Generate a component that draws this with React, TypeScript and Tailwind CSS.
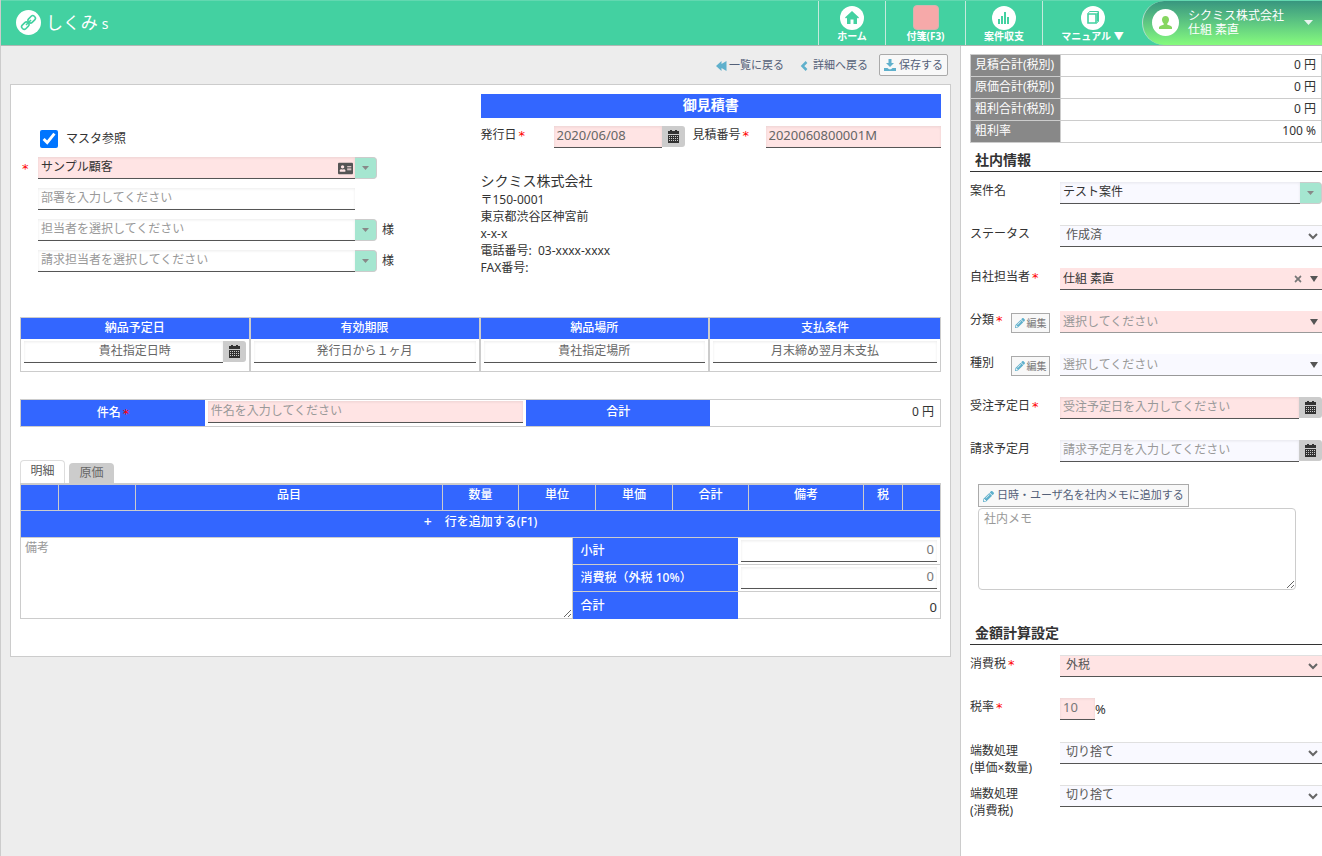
import React from "react";
import { FaPencilAlt, FaAddressCard, FaTimes } from "react-icons/fa";

const FIELD =
  "h-[22px] w-full min-w-0 rounded-none border-b border-[#555] px-[3px] pb-[3px] text-[12px] leading-[18px] text-[#333] placeholder:text-[#999] outline-none shadow-[inset_0_1px_3px_rgba(0,0,0,0.08)]";
const PLAIN = `${FIELD} bg-white`;
const PINK = `${FIELD} bg-[#ffe4e4]`;
const PALE = `${FIELD} bg-[#f9f9ff]`;

function Required() {
  return (
    <span className="inline-block pt-[3px] pl-[2px] align-top font-['DejaVu_Sans',sans-serif] text-[13px] leading-[14px] font-normal text-[#f00]">
      *
    </span>
  );
}

function CalendarIcon() {
  return (
    <svg viewBox="0 0 11 13" className="h-[13px] w-[11px]" fill="#333" aria-hidden="true">
      <path d="M0 1h2V0h2v1h3V0h2v1h2v3H0z" />
      <path
        fillRule="evenodd"
        d="M0 5h11v8H0zM1 6v1h1V6zm2 0v1h1V6zm2 0v1h1V6zm2 0v1h1V6zm2 0v1h1V6zM1 8v1h1V8zm2 0v1h1V8zm2 0v1h1V8zm2 0v1h1V8zm2 0v1h1V8zM1 10v1h1v-1zm2 0v1h1v-1zm2 0v1h1v-1zm2 0v1h1v-1zm2 0v1h1v-1z"
      />
    </svg>
  );
}

function CalendarButton({ label }: { label: string }) {
  return (
    <button
      type="button"
      aria-label={label}
      className="flex h-[21px] w-[23px] shrink-0 items-center justify-center rounded-r-[3px] bg-[#ccc]"
    >
      <CalendarIcon />
    </button>
  );
}

function DropButton({ label }: { label: string }) {
  return (
    <button
      type="button"
      aria-label={label}
      className="flex h-[22px] w-[22px] shrink-0 items-center justify-center rounded-r-[4px] border border-l-0 border-[#ccc] bg-[#a5e6d0]"
    >
      <svg viewBox="0 0 7 4" className="h-[4px] w-[7px]" fill="#888" aria-hidden="true">
        <path d="M0 0h7L3.5 4z" />
      </svg>
    </button>
  );
}

function Chevron() {
  return (
    <svg
      viewBox="0 0 10 7"
      className="pointer-events-none absolute top-[8px] right-[4px] h-[7px] w-[10px]"
      fill="none"
      stroke="#666"
      strokeWidth="2"
      aria-hidden="true"
    >
      <path d="M1 1l4 4 4-4" />
    </svg>
  );
}

function Triangle() {
  return (
    <svg
      viewBox="0 0 8 6"
      className="pointer-events-none absolute top-[8px] right-[4px] h-[6px] w-[8px]"
      fill="#555"
      aria-hidden="true"
    >
      <path d="M0 0h8L4 6z" />
    </svg>
  );
}

function Select({ id, value, pink }: { id: string; value: string; pink?: boolean }) {
  return (
    <div className="relative w-full">
      <select
        id={id}
        defaultValue={value}
        className={`h-[22px] w-full appearance-none rounded-none border-t border-b border-t-[#e0e0e0] border-b-[#555] pb-[3px] pl-[6px] text-[12px] leading-[18px] text-[#555] outline-none ${pink ? "bg-[#ffe4e4]" : "bg-[#f9f9ff]"}`}
      >
        <option>{value}</option>
      </select>
      <Chevron />
    </div>
  );
}

function Combo({
  id,
  value,
  pink,
  chosen,
}: {
  id: string;
  value: string;
  pink?: boolean;
  chosen?: boolean;
}) {
  return (
    <div className="relative w-full">
      <select
        id={id}
        defaultValue={value}
        className={`h-[22px] w-full appearance-none rounded-none border-b pl-[3px] text-[12px] leading-[18px] outline-none ${pink ? "bg-[#ffe4e4]" : "bg-[#f9f9ff]"} ${chosen ? "border-[#555] text-[#333]" : "border-[#999] text-[#999]"}`}
      >
        <option>{value}</option>
      </select>
      {chosen && (
        <button type="button" aria-label="クリア" className="absolute top-[6px] right-[19px] text-[10px] text-[#777]">
          <FaTimes />
        </button>
      )}
      <Triangle />
    </div>
  );
}

function SideRow({
  id,
  label,
  required,
  edit,
  children,
}: {
  id: string;
  label: React.ReactNode;
  required?: boolean;
  edit?: boolean;
  children: React.ReactNode;
}) {
  return (
    <div className="flex h-[43px] items-start">
      <div className="flex w-[90px] shrink-0 items-start">
        <label htmlFor={id} className="leading-[17px] whitespace-nowrap">
          {label}
          {required && <Required />}
        </label>
        {edit && (
          <button
            type="button"
            className="mt-[2px] mr-[10px] ml-auto flex h-[20px] w-[39px] items-center justify-center gap-[2px] border border-[#aaa] bg-[#f8f8f8] text-[10px] leading-none text-[#777]"
          >
            <FaPencilAlt className="text-[10px] text-[#5fb0cc]" />
            編集
          </button>
        )}
      </div>
      <div className="flex min-w-0 flex-1">{children}</div>
    </div>
  );
}

function SideHeading({ children }: { children: React.ReactNode }) {
  return (
    <h2 className="h-[22px] border-b border-[#333] pl-[5px] text-[14px] leading-[20px] font-bold">{children}</h2>
  );
}

function NavItem({ label, width, children }: { label: string; width: string; children: React.ReactNode }) {
  return (
    <a
      href="#"
      className={`flex flex-col items-center border-l border-[#c5e9dc] pt-[4px] text-[10px] leading-[12px] font-bold whitespace-nowrap text-white ${width}`}
    >
      <span className="flex h-[25px] items-center">{children}</span>
      <span>{label}</span>
    </a>
  );
}

function NavCircle({ children }: { children: React.ReactNode }) {
  return (
    <span className="flex h-[24px] w-[24px] items-center justify-center rounded-full bg-white text-[#43d1a1]">
      {children}
    </span>
  );
}

function Header() {
  return (
    <header className="flex h-[46px] items-stretch border-t border-b border-t-[#62d8b0] border-b-[#b0b8b4] bg-[#43d1a1]">
      <a href="#" className="flex items-center pb-[1px] pl-[15px] text-white">
        <span className="flex h-[25px] w-[25px] items-center justify-center rounded-full bg-white text-[#43d1a1]">
          <svg
            viewBox="0 0 17 17"
            className="h-[17px] w-[17px]"
            fill="none"
            stroke="currentColor"
            strokeWidth="1.6"
            aria-hidden="true"
          >
            <g transform="rotate(-45 8.5 8.5)">
              <rect x="0" y="6" width="8" height="5" rx="2.2" />
              <rect x="9" y="6" width="8" height="5" rx="2.2" />
              <path d="M5 8.5h7" />
            </g>
          </svg>
        </span>
        <span className="ml-[5px] text-[17px]">しくみ</span>
        <span className="ml-[4px] pt-[3px] text-[14px]">s</span>
      </a>
      <nav className="ml-auto flex">
        <NavItem label="ホーム" width="w-[67px]">
          <NavCircle>
            <svg viewBox="0 0 14 13" className="h-[13px] w-[14px]" fill="currentColor" aria-hidden="true">
              <path d="M7 0l7 6.500-1 1-1-.7V13H8.500V8.500h-3V13H2V6.800l-1 .7-1-1z" />
            </svg>
          </NavCircle>
        </NavItem>
        <NavItem label="付箋(F3)" width="w-[80px]">
          <span className="h-[25px] w-[26px] rounded-[4px] border border-[#d3b5b0] bg-[#f6a9a9]" />
        </NavItem>
        <NavItem label="案件収支" width="w-[77px]">
          <NavCircle>
            <svg viewBox="0 0 12 12" className="h-[12px] w-[12px]" fill="currentColor" aria-hidden="true">
              <rect x="0" y="7" width="2" height="5" />
              <rect x="3" y="4" width="2" height="8" />
              <rect x="6" y="0" width="2" height="12" />
              <rect x="9" y="5" width="2" height="7" />
            </svg>
          </NavCircle>
        </NavItem>
        <NavItem label="マニュアル ▼" width="w-[100px]">
          <NavCircle>
            <svg
              viewBox="0 0 12 13"
              className="h-[13px] w-[12px]"
              fill="none"
              stroke="currentColor"
              aria-hidden="true"
            >
              <path d="M1 3h8v9H1z" strokeWidth="1.6" />
              <path d="M1 2.500l1.500-2h9v10L9.500 12" />
              <path d="M10.500 1.500v9" strokeWidth="1.400" />
            </svg>
          </NavCircle>
        </NavItem>
      </nav>
      <button
        type="button"
        className="flex w-[180px] items-center rounded-l-full border-l border-[#b5dccd] bg-linear-to-b from-[#38967f] to-[#86fb7c] pb-[1px] pl-[9px] text-left text-[12px] leading-[14px] text-white"
      >
        <span className="flex h-[27px] w-[27px] shrink-0 items-center justify-center rounded-full bg-white text-[#86d660]">
          <svg viewBox="0 0 13 13" className="h-[13px] w-[13px]" fill="currentColor" aria-hidden="true">
            <path d="M6.500 0C8.700 0 10 1.500 10 3.600c0 1.600-.7 3-1.700 3.900v1.200c2.500.8 4.200 1.300 4.700 2.300V13H0v-2c.5-1 2.200-1.500 4.700-2.300V7.500C3.700 6.600 3 5.200 3 3.600 3 1.500 4.300 0 6.500 0z" />
          </svg>
        </span>
        <span className="ml-[9px] whitespace-nowrap">
          シクミス株式会社
          <br />
          仕組 素直
        </span>
        <svg viewBox="0 0 9 5" className="mr-[9px] ml-auto h-[5px] w-[9px]" fill="#e8f5ee" aria-hidden="true">
          <path d="M0 0h9L4.500 5z" />
        </svg>
      </button>
    </header>
  );
}

function Toolbar() {
  return (
    <div className="flex h-[38px] items-center justify-end gap-[16px] pr-[12px] text-[11px] text-[#546078]">
      <a href="#" className="flex items-center gap-[2px]">
        <svg viewBox="0 0 11 10" className="mt-[2px] h-[10px] w-[11px]" fill="#5fb0cc" aria-hidden="true">
          <path d="M5.500 0v3l5-3v10l-5-3v3L0 5z" />
        </svg>
        一覧に戻る
      </a>
      <a href="#" className="flex items-center gap-[5px]">
        <svg
          viewBox="0 0 8 10"
          className="mt-[2px] h-[10px] w-[8px]"
          fill="none"
          stroke="#5fb0cc"
          strokeWidth="2.500"
          aria-hidden="true"
        >
          <path d="M6.500 1l-4 4 4 4" />
        </svg>
        詳細へ戻る
      </a>
      <button
        type="button"
        className="-ml-[5px] flex h-[22px] items-center gap-[3px] rounded-[2px] border border-[#aaa] bg-[#f8f8f8] px-[4px]"
      >
        <svg viewBox="0 0 12 12" className="h-[12px] w-[12px]" fill="#5fb0cc" aria-hidden="true">
          <path d="M4.500 0h3v4H10L6 8 2 4h2.500z" />
          <path d="M0 9h3.500L5 10.200h2L8.500 9H12v3H0z" />
        </svg>
        保存する
      </button>
    </div>
  );
}

function Customer() {
  return (
    <div className="pt-[36px] pr-[60px]">
      <label className="flex h-[18px] items-center pl-[20px]">
        <input type="checkbox" defaultChecked className="h-[18px] w-[18px] accent-[#0075ff]" />
        <span className="pl-[8px]">マスタ参照</span>
      </label>
      <div className="mt-[9px] flex flex-col gap-[9px]">
        <div className="flex">
          <span className="w-[18px] shrink-0 pt-[2px]">
            <Required />
          </span>
          <div className="relative w-[317px]">
            <input aria-label="顧客" defaultValue="サンプル顧客" className={PINK} />
            <button
              type="button"
              aria-label="顧客情報"
              className="absolute top-[4px] right-[2px] text-[15px] text-[#555]"
            >
              <FaAddressCard />
            </button>
          </div>
          <DropButton label="顧客を選択" />
        </div>
        <div className="flex pl-[18px]">
          <div className="w-[317px]">
            <input aria-label="部署" placeholder="部署を入力してください" className={PLAIN} />
          </div>
        </div>
        <div className="flex items-center pl-[18px]">
          <div className="w-[317px]">
            <input aria-label="担当者" placeholder="担当者を選択してください" className={PLAIN} />
          </div>
          <DropButton label="担当者を選択" />
          <span className="pl-[5px]">様</span>
        </div>
        <div className="flex items-center pl-[18px]">
          <div className="w-[317px]">
            <input aria-label="請求担当者" placeholder="請求担当者を選択してください" className={PLAIN} />
          </div>
          <DropButton label="請求担当者を選択" />
          <span className="pl-[5px]">様</span>
        </div>
      </div>
    </div>
  );
}

function Issuer() {
  return (
    <div>
      <h1 className="h-[24px] bg-[#3366ff] text-center text-[14px] leading-[22px] font-bold text-white">御見積書</h1>
      <div className="mt-[8px] flex items-start">
        <label htmlFor="issue" className="w-[73px] shrink-0 leading-[17px]">
          発行日
          <Required />
        </label>
        <div className="flex w-[131px] shrink-0">
          <input id="issue" defaultValue="2020/06/08" className={`${PINK} text-[13px]! text-[#666]!`} />
          <CalendarButton label="発行日を選択" />
        </div>
        <label htmlFor="quote-no" className="ml-[8px] w-[73px] shrink-0 leading-[17px]">
          見積番号
          <Required />
        </label>
        <input id="quote-no" defaultValue="2020060800001M" className={`${PINK} text-[13px]! text-[#666]!`} />
      </div>
      <address className="mt-[23px] leading-[17px] not-italic">
        <p className="text-[14px] leading-[20px]">シクミス株式会社</p>
        <p>〒150-0001</p>
        <p>東京都渋谷区神宮前</p>
        <p>x-x-x</p>
        <p>電話番号:&nbsp; 03-xxxx-xxxx</p>
        <p>FAX番号:</p>
      </address>
    </div>
  );
}

const TERMS = [
  { label: "納品予定日", value: "貴社指定日時", calendar: true },
  { label: "有効期限", value: "発行日から１ヶ月" },
  { label: "納品場所", value: "貴社指定場所" },
  { label: "支払条件", value: "月末締め翌月末支払" },
];

function Terms() {
  return (
    <table className="mt-[41px] w-full table-fixed border-separate border-spacing-0 border border-[#ccc]">
      <thead>
        <tr className="h-[21px]">
          {TERMS.map((t, i) => (
            <th
              key={t.label}
              className={`w-1/4 bg-[#3366ff] p-0 pb-[2px] leading-[18px] font-medium text-white ${i < 3 ? "border-r-2 border-[#ccc]" : ""}`}
            >
              {t.label}
            </th>
          ))}
        </tr>
      </thead>
      <tbody>
        <tr className="h-[32px]">
          {TERMS.map((t, i) => (
            <td key={t.label} className={`px-[3px] pt-[2px] pb-[8px] ${i < 3 ? "border-r-2 border-[#ccc]" : ""}`}>
              <div className="flex">
                <input
                  aria-label={t.label}
                  defaultValue={t.value}
                  className={`${PLAIN} text-center text-[#666]! ${t.calendar ? "pl-[26px]!" : ""}`}
                />
                {t.calendar && <CalendarButton label="納品予定日を選択" />}
              </div>
            </td>
          ))}
        </tr>
      </tbody>
    </table>
  );
}

function Subject() {
  return (
    <div className="mt-[27px] grid h-[28px] grid-cols-[20fr_35fr_20fr_25fr] border border-[#ccc]">
      <label
        htmlFor="subject"
        className="flex items-center justify-center bg-[#3366ff] pb-[2px] leading-[17px] font-medium text-white"
      >
        件名
        <Required />
      </label>
      <div className="px-[3px] pt-[1px]">
        <input id="subject" placeholder="件名を入力してください" className={PINK} />
      </div>
      <div className="bg-[#3366ff] text-center leading-[24px] font-medium text-white">合計</div>
      <div className="pr-[6px] text-right leading-[24px]">0 円</div>
    </div>
  );
}

const COLUMNS = [
  { label: "", width: "w-[37px]" },
  { label: "", width: "w-[77px]" },
  { label: "品目", width: "w-auto" },
  { label: "数量", width: "w-[76px]" },
  { label: "単位", width: "w-[77px]" },
  { label: "単価", width: "w-[77px]" },
  { label: "合計", width: "w-[76px]" },
  { label: "備考", width: "w-[115px]" },
  { label: "税", width: "w-[39px]" },
  { label: "", width: "w-[38px]" },
];

function Items() {
  return (
    <section className="mt-[33px]">
      <div role="tablist" className="flex items-end gap-[4px]">
        <button
          type="button"
          role="tab"
          aria-selected="true"
          className="h-[23px] w-[45px] rounded-t-[4px] border border-b-0 border-[#ddd] bg-white pb-[2px] text-[#555]"
        >
          明細
        </button>
        <button
          type="button"
          role="tab"
          aria-selected="false"
          className="h-[20px] w-[45px] rounded-t-[4px] bg-[#ccc] text-[#666]"
        >
          原価
        </button>
      </div>
      <table className="w-full table-fixed border-separate border-spacing-0 border border-t-2 border-[#ccc]">
        <thead>
          <tr className="h-[26px]">
            {COLUMNS.map((c, i) => (
              <th
                key={i}
                className={`border-b border-[#ccc] bg-[#3366ff] p-0 pb-[5px] leading-[18px] font-medium text-white ${c.width} ${i > 0 ? "border-l" : ""}`}
              >
                {c.label}
              </th>
            ))}
          </tr>
        </thead>
        <tbody>
          <tr>
            <td colSpan={COLUMNS.length} className="bg-[#3366ff] p-0">
              <button
                type="button"
                className="flex h-[26px] w-full items-center justify-center gap-[13px] pb-[5px] font-medium text-white"
              >
                <span className="text-[14px]">+</span>
                <span>行を追加する(F1)</span>
              </button>
            </td>
          </tr>
        </tbody>
      </table>
      <div className="grid grid-cols-[60fr_40fr]">
        <textarea
          aria-label="備考"
          placeholder="備考"
          className="block h-[81px] w-full resize border border-t-0 border-[#ccc] px-[4px] py-[2px] leading-[16px] outline-none placeholder:text-[#999]"
        />
        <table className="w-full table-fixed border-separate border-spacing-0 border-r border-[#ccc]">
          <tbody>
            {["小計", "消費税（外税 10%）"].map((label) => (
              <tr key={label} className="h-[27px]">
                <th className="w-[45%] border-b border-[#ccc] bg-[#3366ff] p-0 pl-[8px] text-left font-medium text-white">
                  {label}
                </th>
                <td className="border-b border-[#ccc] px-[3px] py-0 align-top">
                  <input
                    aria-label={label}
                    defaultValue="0"
                    className={`${PLAIN} mt-[2px] block text-right text-[13px]! text-[#777]!`}
                  />
                </td>
              </tr>
            ))}
            <tr className="h-[27px]">
              <th className="bg-[#3366ff] p-0 pl-[8px] text-left font-medium text-white">合計</th>
              <td className="border-b border-[#ccc] p-0 pt-[3px] pr-[3px] text-right text-[13px]">0</td>
            </tr>
          </tbody>
        </table>
      </div>
    </section>
  );
}

const SUMMARY = [
  ["見積合計(税別)", "0 円"],
  ["原価合計(税別)", "0 円"],
  ["粗利合計(税別)", "0 円"],
  ["粗利率", "100 %"],
];

function Sidebar() {
  return (
    <aside className="w-[362px] shrink-0 border-l border-[#ccc] bg-white pt-[8px] pb-[40px] pl-[9px]">
      <table className="w-full border-collapse">
        <tbody>
          {SUMMARY.map(([label, value]) => (
            <tr key={label} className="h-[22px]">
              <th className="w-[90px] border border-[#ccc] bg-[#888] p-0 pb-[2px] pl-[4px] text-left leading-[18px] font-normal whitespace-nowrap text-white">
                {label}
              </th>
              <td className="border border-[#ccc] p-0 pr-[5px] pb-[2px] text-right leading-[18px]">{value}</td>
            </tr>
          ))}
        </tbody>
      </table>

      <div className="mt-[7px]">
        <SideHeading>社内情報</SideHeading>
      </div>
      <div className="mt-[10px]">
        <SideRow id="project" label="案件名">
          <input id="project" defaultValue="テスト案件" className={PALE} />
          <DropButton label="案件を選択" />
        </SideRow>
        <SideRow id="status" label="ステータス">
          <Select id="status" value="作成済" />
        </SideRow>
        <SideRow id="owner" label="自社担当者" required>
          <Combo id="owner" value="仕組 素直" pink chosen />
        </SideRow>
        <SideRow id="category" label="分類" required edit>
          <Combo id="category" value="選択してください" pink />
        </SideRow>
        <SideRow id="kind" label="種別" edit>
          <Combo id="kind" value="選択してください" />
        </SideRow>
        <SideRow id="order-date" label="受注予定日" required>
          <input id="order-date" placeholder="受注予定日を入力してください" className={PINK} />
          <CalendarButton label="受注予定日を選択" />
        </SideRow>
        <SideRow id="bill-month" label="請求予定月">
          <input id="bill-month" placeholder="請求予定月を入力してください" className={PALE} />
          <CalendarButton label="請求予定月を選択" />
        </SideRow>
      </div>

      <div className="pl-[8px]">
        <button
          type="button"
          className="mt-[1px] flex h-[23px] items-center gap-[3px] border border-[#aaa] bg-[#f8f8f8] px-[4px] pb-[2px] text-[11px] text-[#546078]"
        >
          <FaPencilAlt className="mt-[3px] text-[11px] text-[#5fb0cc]" />
          日時・ユーザ名を社内メモに追加する
        </button>
        <textarea
          aria-label="社内メモ"
          placeholder="社内メモ"
          className="mt-[1px] block h-[82px] w-[318px] resize rounded-[4px] border border-[#ccc] px-[5px] py-[2px] leading-[16px] outline-none placeholder:text-[#999]"
        />
      </div>

      <div className="mt-[33px]">
        <SideHeading>金額計算設定</SideHeading>
      </div>
      <div className="mt-[10px]">
        <SideRow id="tax" label="消費税" required>
          <Select id="tax" value="外税" pink />
        </SideRow>
        <SideRow id="rate" label="税率" required>
          <div className="w-[35px]">
            <input id="rate" defaultValue="10" className={`${PINK} text-[13px]! text-[#777]!`} />
          </div>
          <span className="pt-[2px] text-[13px]">%</span>
        </SideRow>
      </div>
      <div className="mt-[1px]">
        <SideRow
          id="round-line"
          label={
            <>
              端数処理
              <br />
              (単価×数量)
            </>
          }
        >
          <Select id="round-line" value="切り捨て" />
        </SideRow>
        <SideRow
          id="round-tax"
          label={
            <>
              端数処理
              <br />
              (消費税)
            </>
          }
        >
          <Select id="round-tax" value="切り捨て" />
        </SideRow>
      </div>
    </aside>
  );
}

export default function App() {
  return (
    <div className="flex min-h-screen flex-col border-l border-[#ccc] bg-[#ededed] font-['Noto_Sans','Noto_Sans_CJK_JP',sans-serif] text-[12px] leading-[18px] text-[#333]">
      <Header />
      <div className="flex flex-1 items-stretch">
        <main className="min-w-0 flex-1">
          <Toolbar />
          <form className="mx-[9px] border border-[#ccc] bg-white px-[9px] pt-[9px] pb-[37px]">
            <div className="grid grid-cols-2">
              <Customer />
              <Issuer />
            </div>
            <Terms />
            <Subject />
            <Items />
          </form>
        </main>
        <Sidebar />
      </div>
    </div>
  );
}
